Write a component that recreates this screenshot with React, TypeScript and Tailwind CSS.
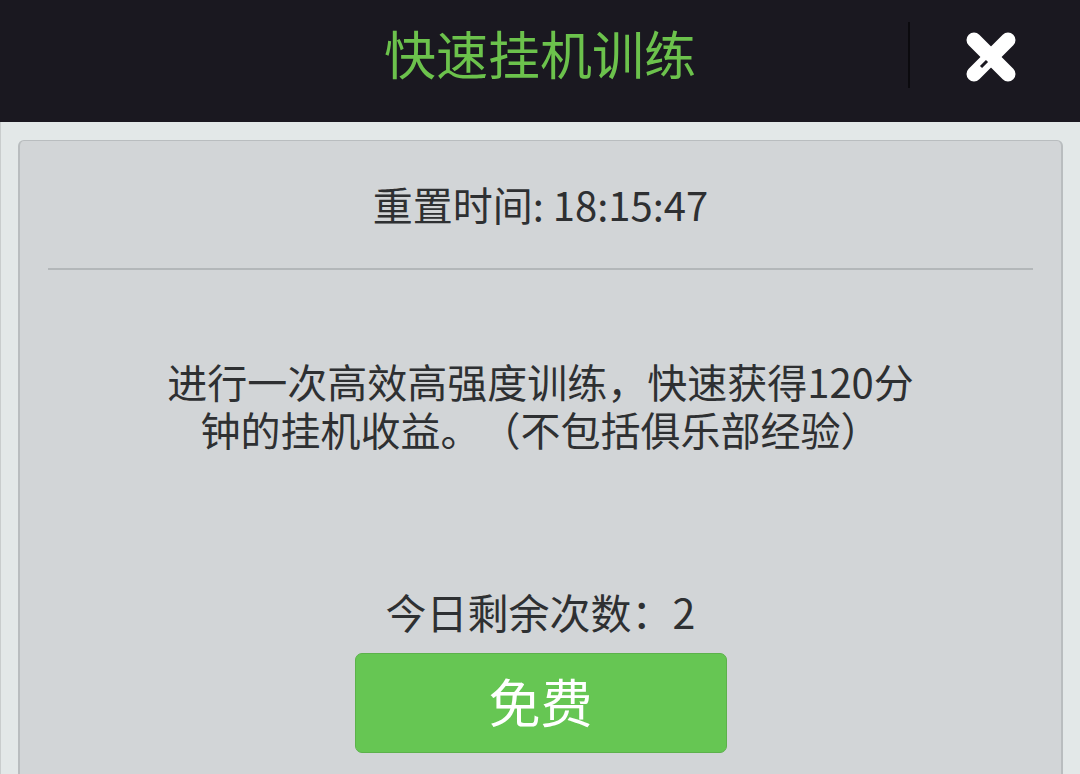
import React from "react";

export default function App() {
  const font = { fontFamily: '"Noto Sans CJK SC", "Noto Sans", sans-serif' };
  return (
    <div className="w-[1080px] h-[774px] overflow-hidden flex flex-col [text-spacing-trim:space-all]" style={font}>
      <div className="h-[122px] bg-[#1a1820] relative flex items-center justify-center shrink-0">
        <div className="text-[52px] leading-none text-[#6cc24c] -mt-[16px]">快速挂机训练</div>
        <div className="absolute left-[908px] top-[22px] w-[2px] h-[66px] bg-[#0b0a0e]" />
        <svg className="absolute left-[962px] top-[28px]" width="58" height="58" viewBox="0 0 58 58">
          <line x1="12" y1="12" x2="46" y2="46" stroke="white" strokeWidth="15" strokeLinecap="round" />
          <line x1="12" y1="46" x2="46" y2="12" stroke="white" strokeWidth="15" strokeLinecap="round" />
          <line x1="19" y1="39" x2="25" y2="33" stroke="#1a1820" strokeWidth="3" />
        </svg>
      </div>
      <div className="flex-1 bg-[#e3e8e8] px-[17px] pt-[18px] border-l border-[#c9cdcd]">
        <div className="h-full bg-[#d2d5d7] border-x-2 border-t border-[#b9bdbf] rounded-t-[6px] flex flex-col items-center pt-[39px] text-[#2e3032]">
          <div className="h-[48px] leading-[48px] text-[40px]">重置时间: 18:15:47</div>
          <div className="mt-[40px] self-stretch mx-[28px] h-[2px] bg-[#b3b7b9]" />
          <div className="mt-[87px] text-center text-[40px] leading-[48px] [text-spacing-trim:space-all]">
            进行一次高效高强度训练，快速获得120分
            <br />
            钟的挂机收益。（不包括俱乐部经验）
          </div>
          <div className="mt-[134px] h-[48px] leading-[48px] text-[41px]">今日剩余次数：2</div>
          <div className="mt-[18px] w-[372px] h-[100px] bg-[#66c653] border border-[#5cb24b] rounded-[7px] flex items-center justify-center text-white text-[52px] leading-none pb-[4px]">
            免费
          </div>
        </div>
      </div>
    </div>
  );
}
